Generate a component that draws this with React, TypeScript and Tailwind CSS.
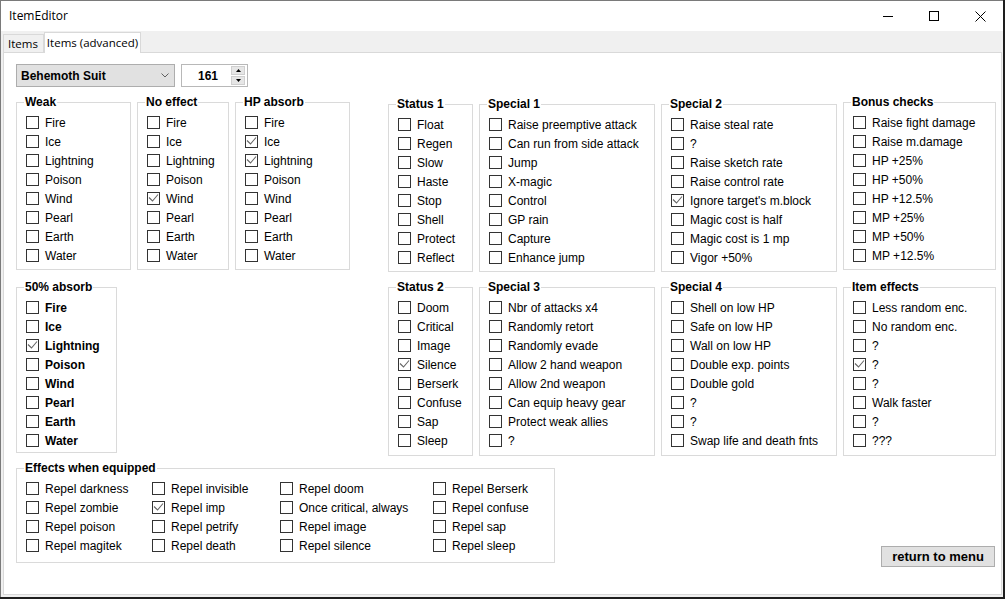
import React from "react";

const ui = "font-['Liberation_Sans',Arial,sans-serif]";

function Box({ checked }: { checked?: boolean }) {
  return (
    <span className="w-[13px] h-[13px] border border-[#333333] bg-white shrink-0 flex items-center justify-center">
      {checked && (
        <svg width="11" height="11" viewBox="0 0 11 11">
          <path d="M1 4.5 L4.5 8 L10 1.5" stroke="#666666" strokeWidth="1.1" fill="none" />
        </svg>
      )}
    </span>
  );
}

function Check({ label, checked, bold }: { label: string; checked?: boolean; bold?: boolean }) {
  return (
    <div className="h-[19px] flex items-center gap-[6px] whitespace-nowrap">
      <Box checked={checked} />
      <span className={bold ? "font-bold" : ""}>{label}</span>
    </div>
  );
}

function Group({
  title,
  className,
  children,
}: {
  title: string;
  className: string;
  children: React.ReactNode;
}) {
  return (
    <div className={`relative border border-[#dadada] pl-[9px] ${className}`}>
      <span className="absolute left-[7px] top-[-8px] bg-white px-[1px] font-bold leading-[14px] whitespace-nowrap">
        {title}
      </span>
      {children}
    </div>
  );
}

type Item = [string, boolean?];

function List({ items, bold }: { items: Item[]; bold?: boolean }) {
  return (
    <>
      {items.map(([label, checked], i) => (
        <Check key={i} label={label} checked={checked} bold={bold} />
      ))}
    </>
  );
}

const elements = ["Fire", "Ice", "Lightning", "Poison", "Wind", "Pearl", "Earth", "Water"];
const el = (checked: string[]): Item[] => elements.map((e) => [e, checked.includes(e)]);

const status1: Item[] = [["Float"], ["Regen"], ["Slow"], ["Haste"], ["Stop"], ["Shell"], ["Protect"], ["Reflect"]];
const special1: Item[] = [
  ["Raise preemptive attack"],
  ["Can run from side attack"],
  ["Jump"],
  ["X-magic"],
  ["Control"],
  ["GP rain"],
  ["Capture"],
  ["Enhance jump"],
];
const special2: Item[] = [
  ["Raise steal rate"],
  ["?"],
  ["Raise sketch rate"],
  ["Raise control rate"],
  ["Ignore target's m.block", true],
  ["Magic cost is half"],
  ["Magic cost is 1 mp"],
  ["Vigor +50%"],
];
const bonus: Item[] = [
  ["Raise fight damage"],
  ["Raise m.damage"],
  ["HP +25%"],
  ["HP +50%"],
  ["HP +12.5%"],
  ["MP +25%"],
  ["MP +50%"],
  ["MP +12.5%"],
];
const status2: Item[] = [["Doom"], ["Critical"], ["Image"], ["Silence", true], ["Berserk"], ["Confuse"], ["Sap"], ["Sleep"]];
const special3: Item[] = [
  ["Nbr of attacks x4"],
  ["Randomly retort"],
  ["Randomly evade"],
  ["Allow 2 hand weapon"],
  ["Allow 2nd weapon"],
  ["Can equip heavy gear"],
  ["Protect weak allies"],
  ["?"],
];
const special4: Item[] = [
  ["Shell on low HP"],
  ["Safe on low HP"],
  ["Wall on low HP"],
  ["Double exp. points"],
  ["Double gold"],
  ["?"],
  ["?"],
  ["Swap life and death fnts"],
];
const itemEffects: Item[] = [
  ["Less random enc."],
  ["No random enc."],
  ["?"],
  ["?", true],
  ["?"],
  ["Walk faster"],
  ["?"],
  ["???"],
];
const repel: { w: string; items: Item[] }[] = [
  { w: "w-[126px]", items: [["Repel darkness"], ["Repel zombie"], ["Repel poison"], ["Repel magitek"]] },
  { w: "w-[128px]", items: [["Repel invisible"], ["Repel imp", true], ["Repel petrify"], ["Repel death"]] },
  { w: "w-[153px]", items: [["Repel doom"], ["Once critical, always"], ["Repel image"], ["Repel silence"]] },
  { w: "w-[110px]", items: [["Repel Berserk"], ["Repel confuse"], ["Repel sap"], ["Repel sleep"]] },
];

export default function App() {
  return (
    <div className="w-[1005px] h-[599px] bg-[#1e1e1e] overflow-hidden">
      <div className="w-[1003px] h-[597px] bg-[#f0f0f0] border-l border-t border-[#7a7a7a] flex flex-col">
        {/* Title bar */}
        <div className="h-[30px] bg-white flex items-center shrink-0">
          <span className="pl-[8px] text-[12px] font-['Open_Sans',sans-serif] text-black flex-1">ItemEditor</span>
          <div className="w-[46px] h-[30px] flex items-center justify-center">
            <svg width="10" height="10" viewBox="0 0 10 10">
              <path d="M0 5.5 H10" stroke="#000" strokeWidth="1" />
            </svg>
          </div>
          <div className="w-[46px] h-[30px] flex items-center justify-center">
            <svg width="10" height="10" viewBox="0 0 10 10">
              <rect x="0.5" y="0.5" width="9" height="9" stroke="#000" fill="none" strokeWidth="1" />
            </svg>
          </div>
          <div className="w-[46px] h-[30px] flex items-center justify-center">
            <svg width="11" height="11" viewBox="0 0 11 11">
              <path d="M0.5 0.5 L10.5 10.5 M10.5 0.5 L0.5 10.5" stroke="#000" strokeWidth="1" />
            </svg>
          </div>
        </div>

        {/* Tabs */}
        <div className="h-[21px] flex items-end pl-[2px] shrink-0 font-['Open_Sans',sans-serif] text-[11.5px] text-black">
          <div className="h-[18px] w-[41px] border border-b-0 border-[#d9d9d9] bg-[#f0f0f0] flex items-center pl-[4px]">
            Items
          </div>
          <div className="relative z-10 h-[21px] mb-[-1px] w-[97px] border border-b-0 border-[#d9d9d9] bg-white flex items-center justify-center pb-[1px]">
            Items (advanced)
          </div>
        </div>

        {/* Tab page */}
        <div className={`flex-1 ml-[2px] mr-[1px] mb-[2px] bg-white border border-[#d9d9d9] ${ui} text-[12px] text-black pl-[12px] flex flex-col`}>
          {/* Selector row */}
          <div className="flex gap-[6px] mt-[11px]">
            <div className="w-[159px] h-[23px] bg-[#e1e1e1] border border-[#adadad] flex items-center pl-[4px] pr-[5px]">
              <span className="font-bold flex-1">Behemoth Suit</span>
              <svg width="8" height="5" viewBox="0 0 8 5">
                <path d="M0.5 0.5 L4 4 L7.5 0.5" stroke="#606060" fill="none" strokeWidth="1" />
              </svg>
            </div>
            <div className="w-[67px] h-[23px] border border-[#b8b8b8] bg-white flex items-center">
              <span className="flex-1 text-center font-bold pl-[3px]">161</span>
              <div className="w-[14px] h-[19px] mr-[2px] flex flex-col gap-[1px]">
                <div className="h-[9px] bg-[#e6e6e6] border border-[#cfcfcf] flex items-center justify-center">
                  <svg width="5" height="3" viewBox="0 0 5 3">
                    <path d="M0 3 L2.5 0 L5 3 Z" fill="#000" />
                  </svg>
                </div>
                <div className="h-[9px] bg-[#e6e6e6] border border-[#cfcfcf] flex items-center justify-center">
                  <svg width="5" height="3" viewBox="0 0 5 3">
                    <path d="M0 0 L2.5 3 L5 0 Z" fill="#000" />
                  </svg>
                </div>
              </div>
            </div>
          </div>

          {/* Main groups */}
          <div className="flex items-start gap-[38px]">
            <div className="w-[334px] flex flex-col items-start">
              <div className="flex items-start gap-[6px] mt-[15px]">
                <Group title="Weak" className="w-[115px] pt-[10px] pb-[4px]">
                  <List items={el([])} />
                </Group>
                <Group title="No effect" className="w-[92px] pt-[10px] pb-[4px]">
                  <List items={el(["Wind"])} />
                </Group>
                <Group title="HP absorb" className="w-[115px] pt-[10px] pb-[4px]">
                  <List items={el(["Ice", "Lightning"])} />
                </Group>
              </div>
              <Group title="50% absorb" className="w-[101px] mt-[17px] pt-[10px] pb-[2px]">
                <List items={el(["Lightning"])} bold />
              </Group>
            </div>

            <div className="flex flex-col">
              <div className="flex items-start gap-[6px] mt-[17px]">
                <Group title="Status 1" className="w-[85px] pt-[10px] pb-[4px]">
                  <List items={status1} />
                </Group>
                <Group title="Special 1" className="w-[176px] pt-[10px] pb-[4px]">
                  <List items={special1} />
                </Group>
                <Group title="Special 2" className="w-[176px] pt-[10px] pb-[4px]">
                  <List items={special2} />
                </Group>
                <Group title="Bonus checks" className="w-[153px] mt-[-2px] pt-[10px] pb-[4px]">
                  <List items={bonus} />
                </Group>
              </div>
              <div className="flex items-start gap-[6px] mt-[15px]">
                <Group title="Status 2" className="w-[85px] pt-[10px] pb-[5px]">
                  <List items={status2} />
                </Group>
                <Group title="Special 3" className="w-[176px] pt-[10px] pb-[5px]">
                  <List items={special3} />
                </Group>
                <Group title="Special 4" className="w-[176px] pt-[10px] pb-[5px]">
                  <List items={special4} />
                </Group>
                <Group title="Item effects" className="w-[153px] pt-[10px] pb-[5px]">
                  <List items={itemEffects} />
                </Group>
              </div>
            </div>
          </div>

          {/* Bottom row */}
          <div className="flex items-start mt-[12px]">
            <Group title="Effects when equipped" className="w-[539px] pt-[10px] pb-[7px] flex">
              {repel.map((col, i) => (
                <div key={i} className={`${col.w} flex flex-col`}>
                  <List items={col.items} />
                </div>
              ))}
            </Group>
            <button className="ml-[326px] mt-[78px] w-[114px] h-[21px] bg-[#e1e1e1] border border-[#adadad] font-bold text-[13px] text-black leading-none">
              return to menu
            </button>
          </div>
        </div>
      </div>
    </div>
  );
}
